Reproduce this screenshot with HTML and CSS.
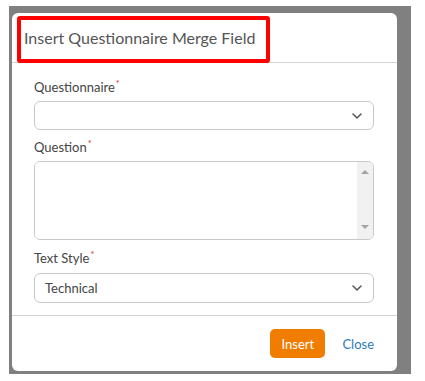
FILE: index.html
```html
<!DOCTYPE html>
<html lang="en">
<head>
    <meta charset="UTF-8">
    <meta name="viewport" content="width=device-width, initial-scale=1.0">
    <title>Insert Questionnaire Merge Field</title>
    <link rel="stylesheet" href="styles.css">
</head>
<body>
    <div class="overlay">
        <div class="modal">
            <div class="modal-header">
                <h2>Insert Questionnaire Merge Field</h2>
                <div class="highlight"></div> <!-- red marker round the title -->
            </div>
            <div class="modal-body">
                <label class="field-label">Questionnaire<span class="req">*</span></label>
                <div class="select">
                    <span class="select-value"></span>
                    <svg class="chevron" width="10" height="6" viewBox="0 0 10 6"><path d="M1 1 L5 5 L9 1" fill="none" stroke="#555" stroke-width="1.5" stroke-linecap="round" stroke-linejoin="round"/></svg>
                </div>

                <label class="field-label">Question<span class="req">*</span></label>
                <div class="textbox">
                    <textarea></textarea>
                    <div class="scrollbar">
                        <span class="arrow-up"></span>
                        <span class="arrow-down"></span>
                    </div>
                </div>

                <label class="field-label">Text Style<span class="req">*</span></label>
                <div class="select">
                    <span class="select-value">Technical</span>
                    <svg class="chevron" width="10" height="6" viewBox="0 0 10 6"><path d="M1 1 L5 5 L9 1" fill="none" stroke="#555" stroke-width="1.5" stroke-linecap="round" stroke-linejoin="round"/></svg>
                </div>
            </div>
            <div class="modal-footer">
                <button class="btn-insert">Insert</button>
                <a class="btn-close" href="#">Close</a>
            </div>
        </div>
    </div>
</body>
</html>
```

FILE: styles.css
```css
body {
    margin: 0;
    background: #fff;
    font-family: Lato, "Open Sans", sans-serif;
    color: #444;
}
.overlay {
    margin: 6px 0 0 9px;
    width: 402px;
    height: 368px;
    box-sizing: border-box;
    padding: 7px 14px 3px 3px;
    background: #808080;
}
.modal {
    position: relative;
    width: 385px;
    height: 358px;
    background: #fff;
    border-radius: 6px;
    display: flex;
    flex-direction: column;
}
.modal-header {
    height: 49px;
    display: flex;
    align-items: center;
    padding-left: 12px;
    border-bottom: 1px solid #d4d4d4;
}
.modal-header h2 {
    margin: 0;
    font-size: 16px;
    font-weight: normal;
    color: #555;
}
.highlight {
    position: absolute;
    left: 5px;
    top: 3px;
    width: 253px;
    height: 47px;
    box-sizing: border-box;
    border: 4px solid #f00;
    border-radius: 3px;
}
.modal-body {
    flex: 1;
    padding: 15px 23px 0 22px;
    display: flex;
    flex-direction: column;
}
.field-label {
    font-size: 13px;
    line-height: 18px;
    color: #444;
    margin-bottom: 5px;
}
.req {
    color: #e3262b;
    font-size: 9px;
    vertical-align: top;
    position: relative;
    top: -3px;
    margin-left: 1px;
}
.select {
    height: 29px;
    flex-shrink: 0;
    box-sizing: border-box;
    border: 1px solid #c9c9c9;
    border-radius: 6px;
    display: flex;
    align-items: center;
    justify-content: space-between;
    padding: 0 11px 0 10px;
    margin-bottom: 8px;
    font-size: 13px;
    color: #444;
}
.select:last-child {
    height: 30px;
    margin-top: 1px;
    margin-bottom: 0;
}
.chevron {
    display: block;
}
.textbox {
    height: 79px;
    flex-shrink: 0;
    box-sizing: border-box;
    border: 1px solid #c9c9c9;
    border-radius: 6px;
    display: flex;
    overflow: hidden;
    margin-bottom: 9px;
}
.textbox textarea {
    flex: 1;
    border: none;
    outline: none;
    resize: none;
    font-family: inherit;
}
.scrollbar {
    width: 16px;
    background: #f1f1f1;
    display: flex;
    flex-direction: column;
    justify-content: space-between;
    align-items: center;
    padding: 8px 0 10px;
}
.arrow-up {
    width: 0;
    height: 0;
    border-left: 4px solid transparent;
    border-right: 4px solid transparent;
    border-bottom: 4px solid #a3a3a3;
}
.arrow-down {
    width: 0;
    height: 0;
    border-left: 4px solid transparent;
    border-right: 4px solid transparent;
    border-top: 4px solid #a3a3a3;
}
.modal-footer {
    height: 55px;
    flex-shrink: 0;
    border-top: 1px solid #d4d4d4;
    display: flex;
    align-items: center;
    justify-content: flex-end;
    gap: 17px;
    padding-right: 23px;
}
.btn-insert {
    width: 55px;
    height: 29px;
    background: #f07c00;
    color: #fff;
    border: none;
    border-radius: 5px;
    font-family: inherit;
    font-size: 13px;
    cursor: pointer;
}
.btn-close {
    color: #2b7bb9;
    font-size: 13px;
    text-decoration: none;
}
```
